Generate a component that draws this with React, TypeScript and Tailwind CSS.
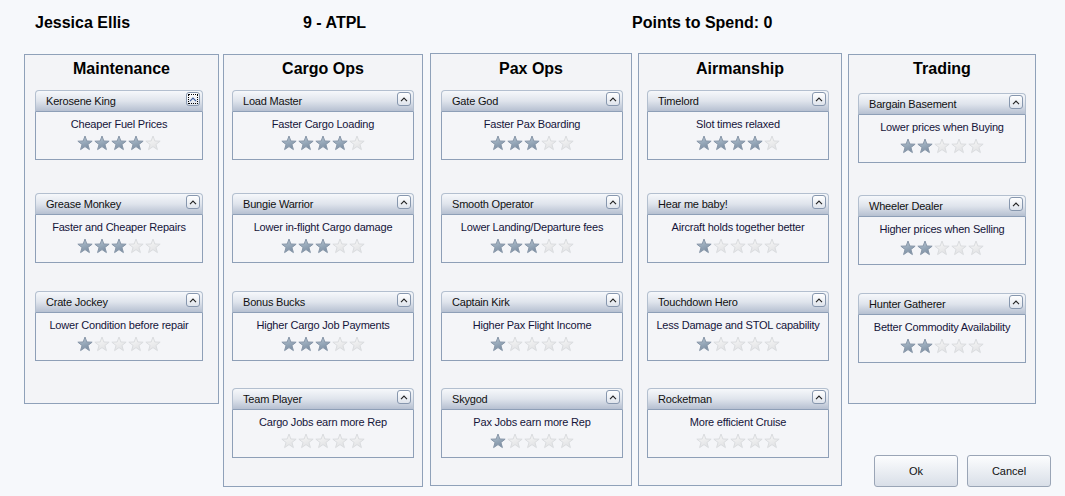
import React from "react";

type Skill = { name: string; desc: string; stars: number; focus?: boolean };
type Col = {
  title: string;
  w: number;
  h: number;
  ml: number;
  up?: boolean;
  inset: number;
  cardW: number;
  firstMt: number;
  gaps: number[];
  skills: Skill[];
};

const cols: Col[] = [
  {
    title: "Maintenance",
    w: 195,
    h: 350,
    ml: 24,
    inset: 10,
    cardW: 168,
    firstMt: 12,
    gaps: [33, 28, 27],
    skills: [
      { name: "Kerosene King", desc: "Cheaper Fuel Prices", stars: 4, focus: true },
      { name: "Grease Monkey", desc: "Faster and Cheaper Repairs", stars: 3 },
      { name: "Crate Jockey", desc: "Lower Condition before repair", stars: 1 },
    ],
  },
  {
    title: "Cargo Ops",
    w: 200,
    h: 433,
    ml: 4,
    inset: 8,
    cardW: 182,
    firstMt: 12,
    gaps: [33, 28, 27],
    skills: [
      { name: "Load Master", desc: "Faster Cargo Loading", stars: 4 },
      { name: "Bungie Warrior", desc: "Lower in-flight Cargo damage", stars: 3 },
      { name: "Bonus Bucks", desc: "Higher Cargo Job Payments", stars: 3 },
      { name: "Team Player", desc: "Cargo Jobs earn more Rep", stars: 0 },
    ],
  },
  {
    title: "Pax Ops",
    w: 202,
    h: 433,
    ml: 7,
    up: true,
    inset: 10,
    cardW: 182,
    firstMt: 12,
    gaps: [33, 28, 27],
    skills: [
      { name: "Gate God", desc: "Faster Pax Boarding", stars: 3 },
      { name: "Smooth Operator", desc: "Lower Landing/Departure fees", stars: 3 },
      { name: "Captain Kirk", desc: "Higher Pax Flight Income", stars: 1 },
      { name: "Skygod", desc: "Pax Jobs earn more Rep", stars: 1 },
    ],
  },
  {
    title: "Airmanship",
    w: 204,
    h: 433,
    ml: 6,
    up: true,
    inset: 8,
    cardW: 182,
    firstMt: 12,
    gaps: [33, 28, 27],
    skills: [
      { name: "Timelord", desc: "Slot times relaxed", stars: 4 },
      { name: "Hear me baby!", desc: "Aircraft holds together better", stars: 1 },
      { name: "Touchdown Hero", desc: "Less Damage and STOL capability", stars: 1 },
      { name: "Rocketman", desc: "More efficient Cruise", stars: 0 },
    ],
  },
  {
    title: "Trading",
    w: 188,
    h: 350,
    ml: 6,
    inset: 9,
    cardW: 168,
    firstMt: 15,
    gaps: [32, 28],
    skills: [
      { name: "Bargain Basement", desc: "Lower prices when Buying", stars: 2 },
      { name: "Wheeler Dealer", desc: "Higher prices when Selling", stars: 2 },
      { name: "Hunter Gatherer", desc: "Better Commodity Availability", stars: 2 },
    ],
  },
];

const STAR =
  "8,1 9.82,5.99 15.13,6.18 10.95,9.46 12.41,14.57 8,11.6 3.59,14.57 5.05,9.46 0.87,6.18 6.18,5.99";

function Star({ on }: { on: boolean }) {
  return (
    <svg width="16" height="16" viewBox="0 0 16 16" className="block">
      <polygon
        points={STAR}
        fill={on ? "url(#starOn)" : "url(#starOff)"}
        stroke={on ? "#8796a8" : "#dadcdf"}
        strokeWidth="1"
        strokeLinejoin="round"
      />
    </svg>
  );
}

function Chevron({ focus }: { focus?: boolean }) {
  return (
    <div className="mt-[1px] mr-[2px] w-[14px] h-[14px] rounded-[3px] border border-[#8797ae] bg-linear-to-b from-[#ffffff] to-[#dfe4ec] flex items-center justify-center">
      <div
        className={
          focus
            ? "w-[10px] h-[10px] border border-dotted border-black flex items-center justify-center"
            : "w-[10px] h-[10px] flex items-center justify-center"
        }
      >
        <svg width="8" height="5" viewBox="0 0 8 5" className="block">
          <polyline
            points="1,4.2 4,1 7,4.2"
            fill="none"
            stroke={focus ? "#3a5a9a" : "#222"}
            strokeWidth="1.1"
          />
        </svg>
      </div>
    </div>
  );
}

function Card({ s, w, mt }: { s: Skill; w: number; mt: number }) {
  return (
    <div style={{ width: w, marginTop: mt }} className="flex flex-col">
      <div className="h-[22px] rounded-t-[4px] border border-[#b3bfcf] border-b-[#8e9fb7] bg-linear-to-b from-[#f6f8fb] via-[#dfe4ec] to-[#b6c0d1] flex items-start justify-between">
        <span className="pl-[10px] leading-[20px] text-[11px] tracking-[-0.2px] text-[#111]">
          {s.name}
        </span>
        <Chevron focus={s.focus} />
      </div>
      <div className="h-[48px] border border-t-0 border-[#8e9fb7] bg-[#f4f5f8] flex flex-col items-center pt-[5px]">
        <div className="leading-[14px] text-[11px] tracking-[-0.2px] text-[#14143a] whitespace-nowrap">
          {s.desc}
        </div>
        <div className="mt-[4px] flex gap-[1px]">
          {[0, 1, 2, 3, 4].map((i) => (
            <Star key={i} on={i < s.stars} />
          ))}
        </div>
      </div>
    </div>
  );
}

function Column({ c }: { c: Col }) {
  return (
    <div
      style={{ width: c.w, height: c.h, marginLeft: c.ml }}
      className={
        (c.up ? "-mt-px pt-[6px] " : "pt-[5px] ") +
        "shrink-0 border border-[#8fa1b9] bg-[#f3f4f7] flex flex-col"
      }
    >
      <div className="text-center leading-[18px] text-[16px] font-bold text-black">
        {c.title}
      </div>
      <div style={{ paddingLeft: c.inset }} className="flex flex-col">
        {c.skills.map((s, i) => (
          <Card
            key={s.name}
            s={s}
            w={c.cardW}
            mt={i === 0 ? c.firstMt : c.gaps[i - 1]}
          />
        ))}
      </div>
    </div>
  );
}

export default function App() {
  const last = cols[4];
  return (
    <div
      className="w-[1065px] h-[496px] overflow-hidden bg-[#f6f8fb] text-black"
      style={{ fontFamily: '"Liberation Sans", Arial, sans-serif' }}
    >
      <svg width="0" height="0" className="absolute">
        <defs>
          <linearGradient id="starOn" x1="0" y1="0" x2="0.4" y2="1">
            <stop offset="0" stopColor="#d3dce5" />
            <stop offset="0.45" stopColor="#9fb0c0" />
            <stop offset="1" stopColor="#7e90a4" />
          </linearGradient>
          <linearGradient id="starOff" x1="0" y1="0" x2="0.4" y2="1">
            <stop offset="0" stopColor="#fafafa" />
            <stop offset="1" stopColor="#e2e3e5" />
          </linearGradient>
        </defs>
      </svg>
      <div className="h-[54px] flex pt-[14px] pl-[35px] text-[16px] leading-[18px] font-bold">
        <div className="w-[268px]">Jessica Ellis</div>
        <div className="w-[329px]">9 - ATPL</div>
        <div>Points to Spend: 0</div>
      </div>
      <div className="flex items-start">
        {cols.slice(0, 4).map((c) => (
          <Column key={c.title} c={c} />
        ))}
        <div className="flex flex-col">
          <Column c={last} />
          <div className="flex gap-[9px] ml-[32px] mt-[51px]">
            {["Ok", "Cancel"].map((t) => (
              <div
                key={t}
                className="w-[84px] h-[32px] rounded-[3px] border border-[#9aa5b6] bg-linear-to-b from-[#fcfdfe] to-[#d9dfe8] flex items-center justify-center text-[11px] text-[#111]"
              >
                {t}
              </div>
            ))}
          </div>
        </div>
      </div>
    </div>
  );
}
